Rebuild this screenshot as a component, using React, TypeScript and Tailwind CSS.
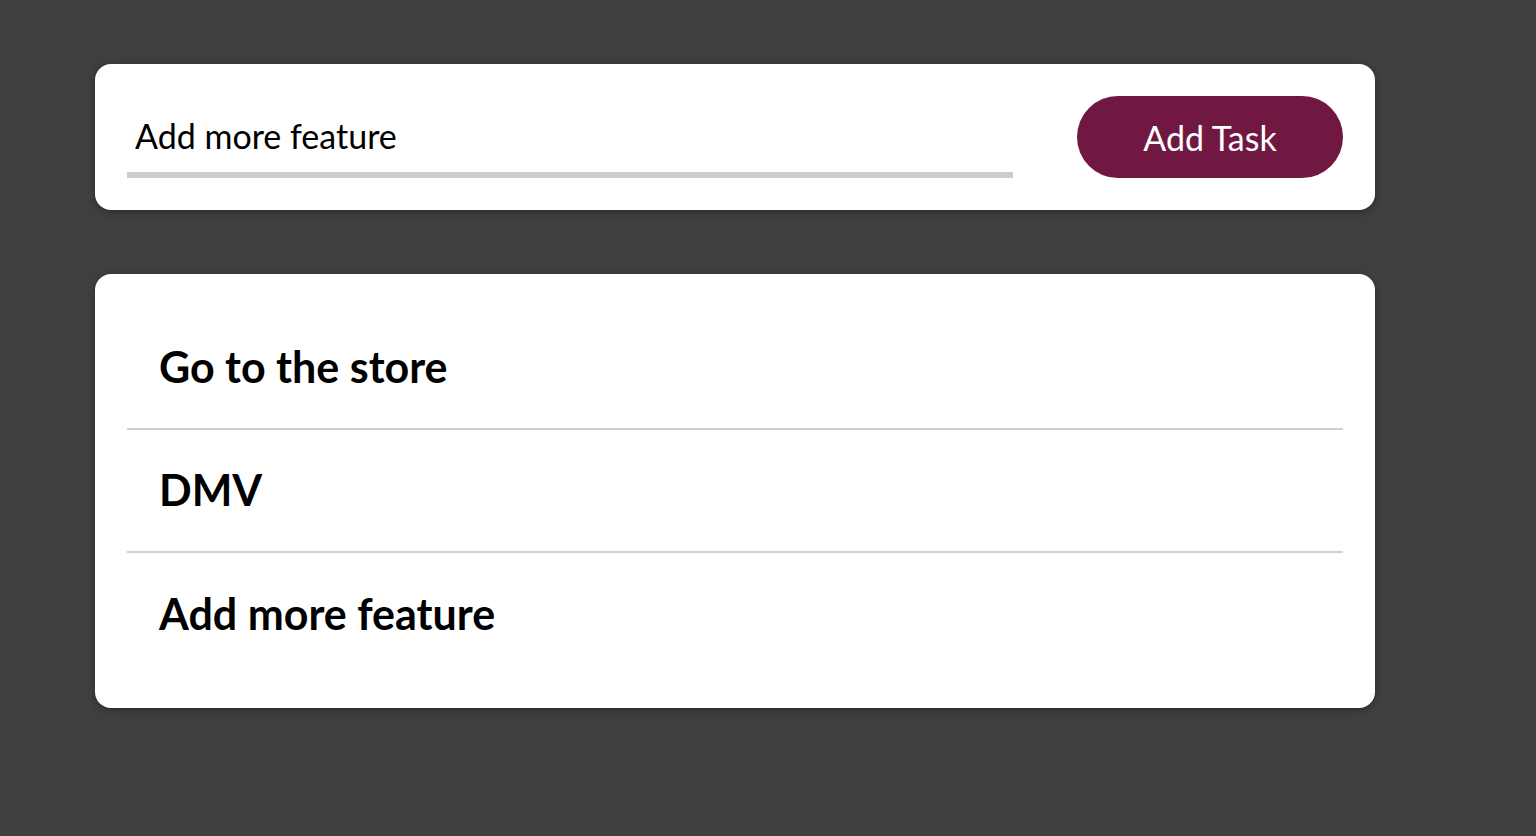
const tasks = ['Go to the store', 'DMV', 'Add more feature']

const App: React.FC = () => {
  return (
    <div className="min-h-screen bg-[#404040] px-[95px] pt-16 font-['Lato',sans-serif]">
      <div className="w-[1280px]">
        <div className="flex items-end justify-between rounded-2xl bg-white p-8 shadow-[0_2px_8px_rgba(0,0,0,0.35)]">
          <div className="w-[886px] border-b-[6px] border-[#cccccc] pl-2 pt-5 pb-4">
            <input
              className="w-full bg-transparent text-[34px] leading-[40px] text-black outline-none"
              defaultValue="Add more feature"
            />
          </div>
          <button className="h-[82px] w-[266px] rounded-full bg-[#701842] text-[34px] text-white">
            Add Task
          </button>
        </div>

        <div className="mt-16 rounded-2xl bg-white p-8 shadow-[0_2px_8px_rgba(0,0,0,0.35)]">
          <div className="flex h-[124px] items-center border-b-2 border-[#d0d0d0] px-8">
            <span className="text-[43px] font-bold text-black">{tasks[0]}</span>
          </div>
          <div className="flex h-[123px] items-center border-b-2 border-[#d0d0d0] px-8">
            <span className="text-[43px] font-bold text-black">{tasks[1]}</span>
          </div>
          <div className="flex h-[123px] items-center px-8">
            <span className="text-[43px] font-bold text-black">{tasks[2]}</span>
          </div>
        </div>
      </div>
    </div>
  )
}

export default App
